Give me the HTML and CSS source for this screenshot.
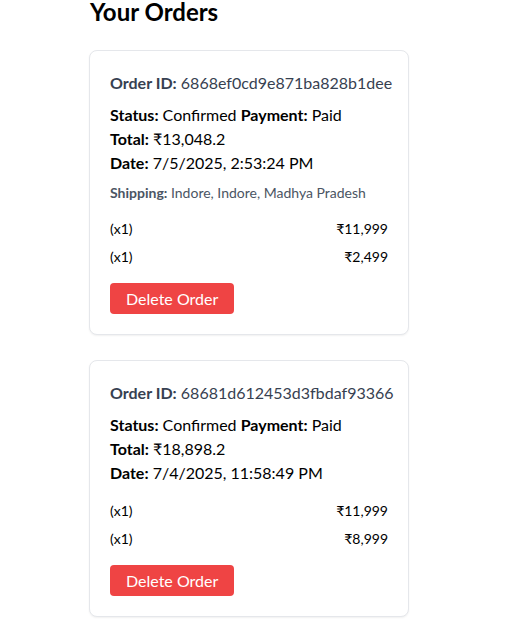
FILE: index.html
```html
<!DOCTYPE html>
<html lang="en">
<head>
<meta charset="utf-8">
<title>Your Orders</title>
<link rel="stylesheet" href="styles.css">
</head>
<body>
<main class="orders">
  <h2 class="orders-title">Your Orders</h2>

  <section class="card">
    <p class="order-id"><strong>Order ID:</strong> 6868ef0cd9e871ba828b1dee</p>
    <p class="line"><strong>Status:</strong> Confirmed <strong>Payment:</strong> Paid</p>
    <p class="line"><strong>Total:</strong> ₹13,048.2</p>
    <p class="line"><strong>Date:</strong> 7/5/2025, 2:53:24 PM</p>
    <p class="shipping"><strong>Shipping:</strong> Indore, Indore, Madhya Pradesh</p>
    <ul class="items">
      <li class="item"><span>(x1)</span><span>₹11,999</span></li>
      <li class="item"><span>(x1)</span><span>₹2,499</span></li>
    </ul>
    <button class="delete-btn" type="button">Delete Order</button>
  </section>

  <section class="card">
    <p class="order-id"><strong>Order ID:</strong> 68681d612453d3fbdaf93366</p>
    <p class="line"><strong>Status:</strong> Confirmed <strong>Payment:</strong> Paid</p>
    <p class="line"><strong>Total:</strong> ₹18,898.2</p>
    <p class="line"><strong>Date:</strong> 7/4/2025, 11:58:49 PM</p>
    <ul class="items">
      <li class="item"><span>(x1)</span><span>₹11,999</span></li>
      <li class="item"><span>(x1)</span><span>₹8,999</span></li>
    </ul>
    <button class="delete-btn" type="button">Delete Order</button>
  </section>
</main>
</body>
</html>
```

FILE: styles.css
```css
* { box-sizing: border-box; }

html, body {
  margin: 0;
  padding: 0;
  background: #ffffff;
}

body {
  font-family: Lato, "Open Sans", "Noto Sans", sans-serif;
  color: #000000;
  font-size: 16px;
  line-height: 24px;
}

.orders {
  width: 320px;
  margin: 0 0 0 89px;
}

.orders-title {
  margin: 0 0 26px 1px;
  font-size: 24px;
  line-height: 24px;
  font-weight: 700;
}

.card {
  border: 1px solid #e5e7eb;
  border-radius: 8px;
  box-shadow: 0 1px 2px rgba(0, 0, 0, 0.06);
  padding: 20px;
  margin-bottom: 25px;
  background: #fff;
}

.card p {
  margin: 0;
  white-space: nowrap;
}

.card .order-id {
  color: #374151;
  margin-bottom: 8px;
}

.card .shipping {
  margin-top: 8px;
  font-size: 14px;
  line-height: 20px;
  color: #4b5563;
}

.items {
  list-style: none;
  margin: 12px 0 0;
  padding: 0;
}

.item {
  display: flex;
  justify-content: space-between;
  padding: 4px 0;
  font-size: 14px;
  line-height: 20px;
}

.delete-btn {
  margin-top: 12px;
  display: block;
  border: 0;
  border-radius: 4px;
  background: #ef4444;
  color: #fff;
  font-family: inherit;
  font-size: 16px;
  line-height: 23px;
  padding: 4px 16px;
  cursor: pointer;
}
```
